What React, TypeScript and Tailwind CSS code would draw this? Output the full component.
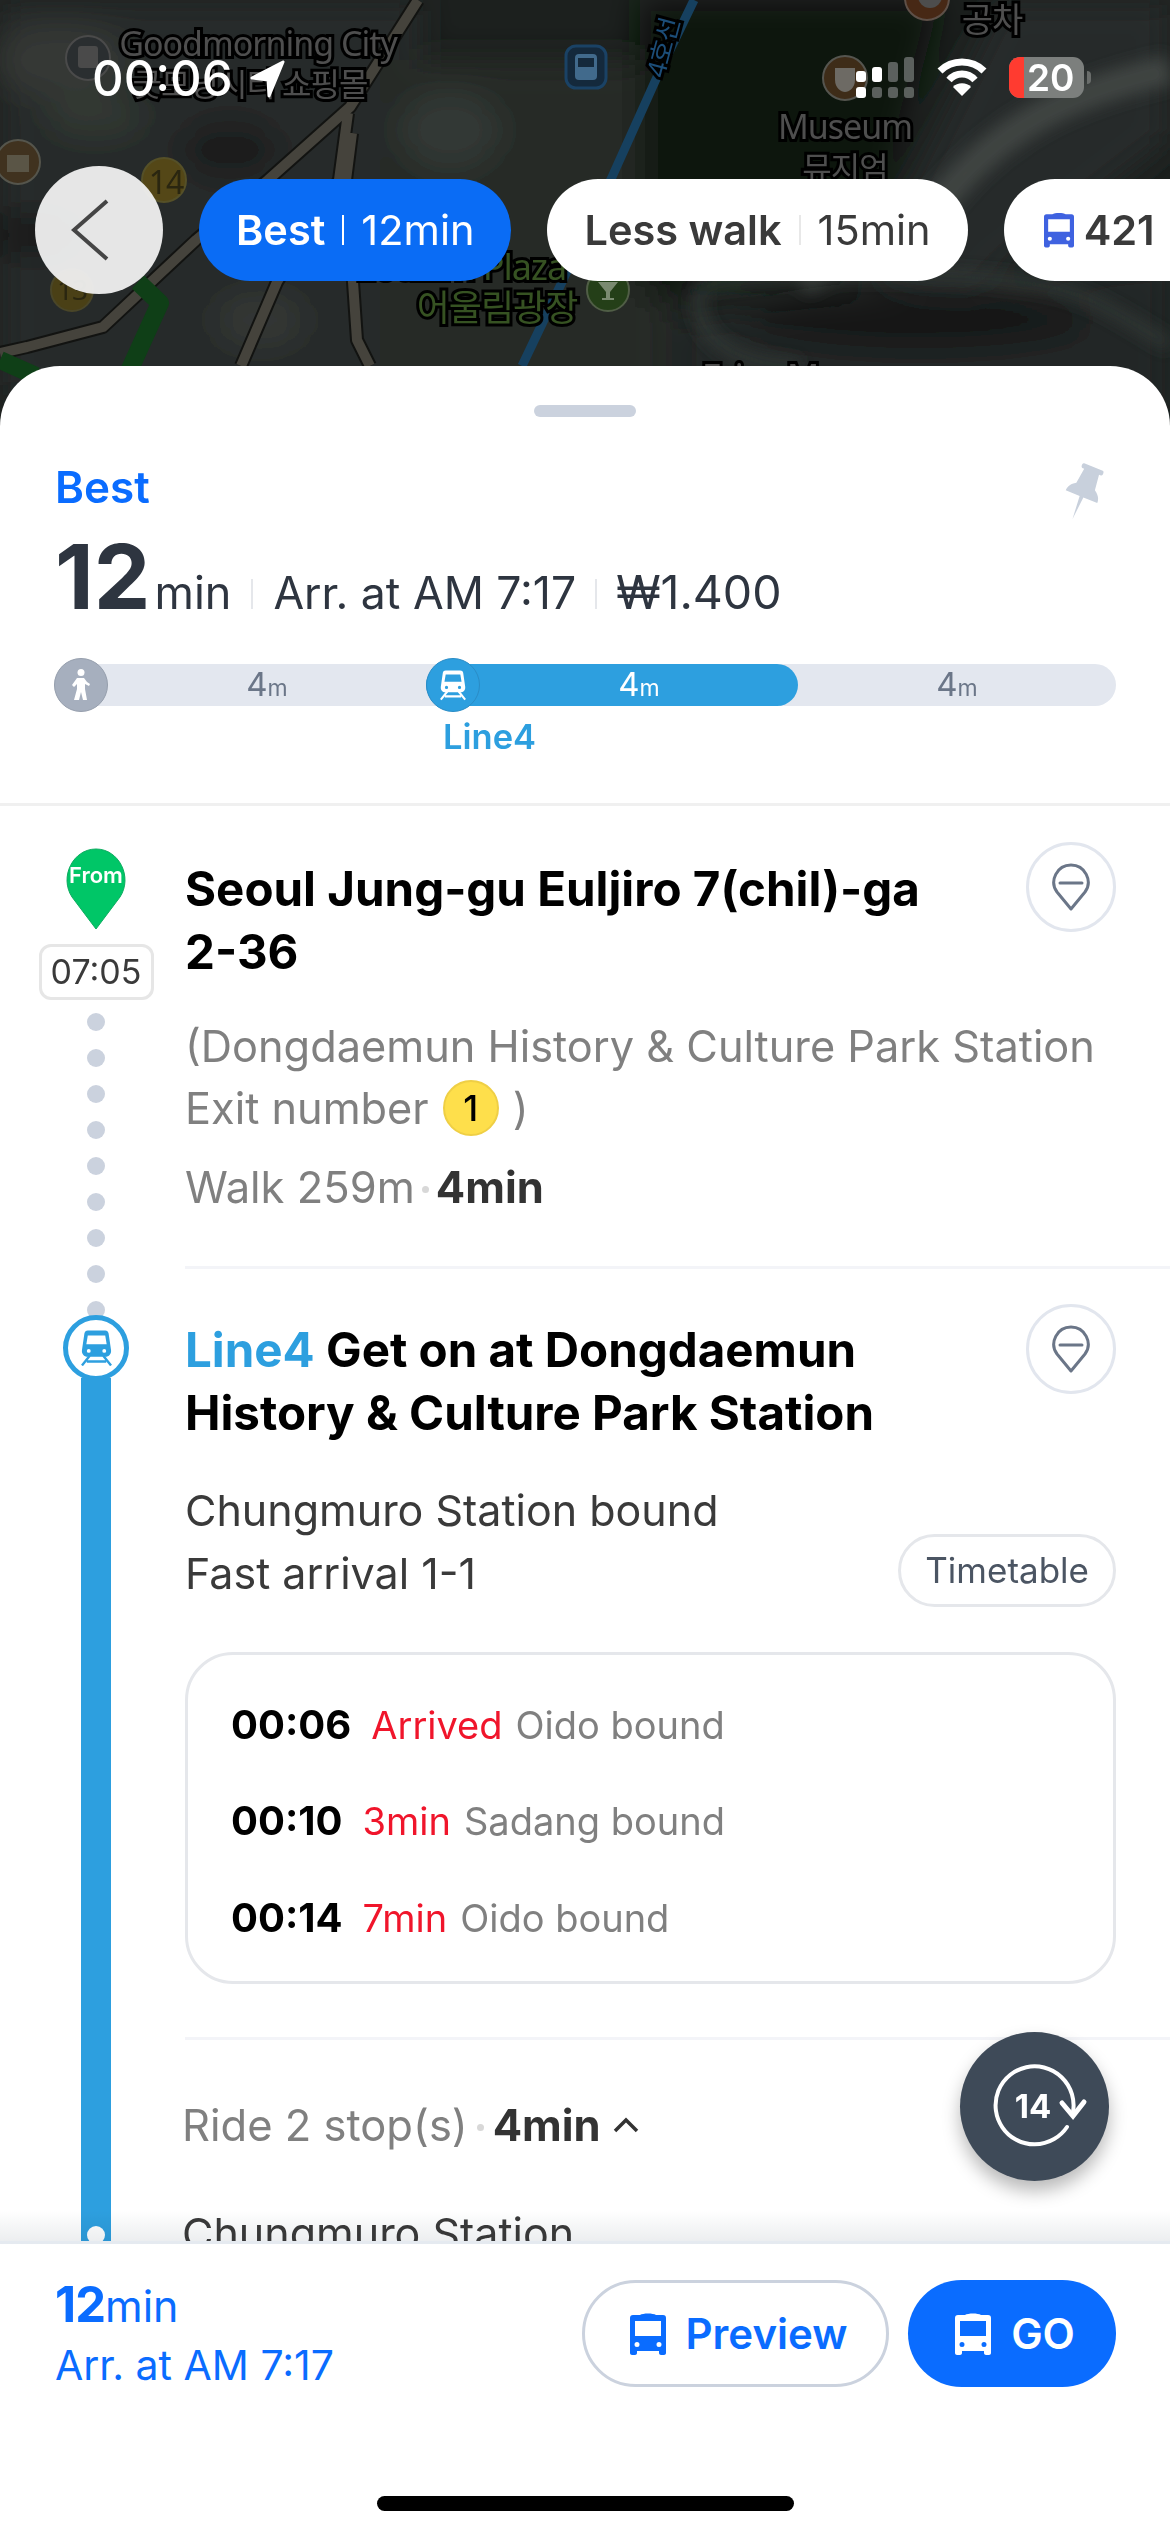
const MapLabel = ({x, y, size, fill = '#4e4e4e', rotate, plain, children}: {x: number; y: number; size: number; fill?: string; rotate?: number; plain?: boolean; children: string}) => (
  <text
    x={x}
    y={y}
    fontSize={size}
    fill={fill}
    stroke={plain ? 'none' : '#000'}
    strokeWidth={6}
    paintOrder="stroke"
    textAnchor="middle"
    letterSpacing={-1}
    fontFamily="'Noto Sans', 'Noto Sans CJK KR', sans-serif"
    transform={rotate ? `rotate(${rotate} ${x} ${y})` : undefined}
  >
    {children}
  </text>
)

const MapBackground = () => (
  <svg className="absolute left-0 top-0" width="1170" height="440" viewBox="0 0 1170 440">
    <defs>
      <filter id="soft" x="-20%" y="-20%" width="140%" height="140%"><feGaussianBlur stdDeviation="16" /></filter>
      <filter id="softer" x="-20%" y="-20%" width="140%" height="140%"><feGaussianBlur stdDeviation="8" /></filter>
    </defs>
    <rect width="1170" height="440" fill="#1c201e" />
    <g filter="url(#soft)">
      <rect x="0" y="0" width="420" height="400" fill="#272b29" />
      <rect x="380" y="60" width="290" height="340" fill="#262a27" />
      <path d="M640 0H940L880 230L640 300Z" fill="#0f1311" />
      <path d="M680 320L1170 260V420H680Z" fill="#222725" />
      <path d="M1000 0H1170V140L960 300L860 280Z" fill="#262b29" />
      <ellipse cx="920" cy="320" rx="170" ry="28" fill="#131715" />
      <ellipse cx="60" cy="60" rx="70" ry="36" fill="#343834" />
      <ellipse cx="95" cy="115" rx="50" ry="22" fill="#323733" />
      <ellipse cx="230" cy="150" rx="50" ry="30" fill="#1a1d1b" />
      <ellipse cx="30" cy="235" rx="50" ry="18" fill="#161917" />
      <ellipse cx="260" cy="320" rx="45" ry="25" fill="#353936" />
      <ellipse cx="450" cy="130" rx="50" ry="40" fill="#333835" />
    </g>
    <g filter="url(#softer)" fill="none">
      <path d="M1170 70C1080 90 1010 120 950 190C920 225 860 250 800 280" stroke="#3f4542" strokeWidth="30" />
      <path d="M700 285C790 270 940 270 1040 285C1100 295 1140 330 1170 345" stroke="#323835" strokeWidth="12" />
      <path d="M700 290C690 340 740 366 800 366" stroke="#323835" strokeWidth="12" />
    </g>
    <g fill="none" strokeLinejoin="round">
      <path d="M418 0L350 107L268 180L196 240L103 327L27 347L0 353M348 113L339 180L277 282L241 366M352 133L346 180L353 282L357 340L370 366" stroke="#121311" strokeWidth="14" />
      <path d="M418 0L350 107L268 180L196 240L103 327L27 347L0 353M348 113L339 180L277 282L241 366M352 133L346 180L353 282L357 340L370 366" stroke="#45433c" strokeWidth="10" />
      <path d="M694 0L657 77L612 177L522 366" stroke="#16405f" strokeWidth="9" />
      <path d="M138 282L160 303L125 380M0 360L36 376" stroke="#0f3f17" strokeWidth="18" />
    </g>
    <circle cx="88" cy="58" r="22" fill="#2a2e30" stroke="#4a4a4a" strokeWidth="2" />
    <rect x="78" y="46" width="20" height="22" rx="3" fill="#4a4a4a" />
    <rect x="566" y="46" width="40" height="42" rx="10" fill="#14293c" stroke="#1a4265" strokeWidth="3" />
    <rect x="575" y="54" width="22" height="26" rx="4" fill="#416a8c" />
    <rect x="578" y="58" width="16" height="9" fill="#14293c" />
    <circle cx="18" cy="162" r="22" fill="#40321f" stroke="#55554c" strokeWidth="2" />
    <rect x="7" y="155" width="22" height="17" fill="#5a5546" />
    <circle cx="164" cy="180" r="22" fill="#544717" stroke="#555028" strokeWidth="2" />
    <circle cx="72" cy="290" r="21" fill="#4a4016" stroke="#4a4628" strokeWidth="2" />
    <circle cx="608" cy="290" r="21" fill="#243f18" stroke="#505e46" strokeWidth="2" />
    <path d="M598 282H618L610 292V298H614V300H602V298H606V292Z" fill="#7a8a70" />
    <circle cx="845" cy="78" r="22" fill="#3e2c18" stroke="#55554f" strokeWidth="2" />
    <path d="M835 68H855V80C855 88 849 92 845 92C841 92 835 88 835 80Z" fill="#6d6a64" />
    <circle cx="927" cy="-2" r="22" fill="#472815" stroke="#5e5048" strokeWidth="2" />
    <circle cx="930" cy="-4" r="12" fill="#4d4d4d" />
    <MapLabel x={258} y={56} size={34}>Goodmorning City</MapLabel>
    <MapLabel x={250} y={96} size={32}>굿모닝시티 쇼핑몰</MapLabel>
    <MapLabel x={672} y={50} size={26} fill="#1c4d78" rotate={-75}>4호선</MapLabel>
    <MapLabel x={992} y={32} size={34}>공차</MapLabel>
    <MapLabel x={845} y={139} size={34}>Museum</MapLabel>
    <MapLabel x={845} y={180} size={32}>뮤지엄</MapLabel>
    <MapLabel x={166} y={194} size={32} fill="#2a2610" plain>14</MapLabel>
    <MapLabel x={72} y={300} size={28} fill="#2a2610" plain>13</MapLabel>
    <MapLabel x={461} y={280} size={36} fill="#365222">Eoullim Plaza</MapLabel>
    <MapLabel x={497} y={321} size={36} fill="#365222">어울림광장</MapLabel>
    <MapLabel x={760} y={390} size={36}>Erica M</MapLabel>
  </svg>
)

const StatusBar = () => (
  <div className="relative flex justify-between pt-[57px] pl-[92px] pr-[79px] h-[166px]">
    <div className="flex items-start gap-[16px] text-white">
      <span className="text-[49px] leading-[44px] font-medium">00:06</span>
      <svg width="38" height="40" viewBox="0 0 38 40" className="mt-[2px]">
        <path d="M34 3L3 19L19 21L20 37Z" fill="#fff" stroke="#fff" strokeWidth="3" strokeLinejoin="round" />
      </svg>
    </div>
    <div className="flex items-start">
      <div className="grid grid-cols-4 gap-x-[6px] gap-y-[5px] items-end w-[58px] h-[41px]">
        <div className="h-[11px] rounded-[3px] bg-white" />
        <div className="h-[15px] rounded-[3px] bg-white" />
        <div className="h-[20px] rounded-[3px] bg-[#5b605d]" />
        <div className="h-[25px] rounded-[3px] bg-[#5b605d]" />
        <div className="h-[11px] rounded-[3px] bg-white" />
        <div className="h-[11px] rounded-[3px] bg-[#5b605d]" />
        <div className="h-[11px] rounded-[3px] bg-[#5b605d]" />
        <div className="h-[11px] rounded-[3px] bg-[#5b605d]" />
      </div>
      <svg width="50" height="39" viewBox="0 0 50 39" className="ml-[23px]" fill="none">
        <path d="M3 14C15 2 35 2 47 14" stroke="#fff" strokeWidth="7" />
        <path d="M12 23C19 15 31 15 38 23" stroke="#fff" strokeWidth="7" />
        <path d="M25 39L16 30C20 25 30 25 34 30Z" fill="#fff" />
      </svg>
      <div className="ml-[22px] flex items-center">
        <div className="relative w-[75px] h-[41px] rounded-[11px] overflow-hidden bg-[#7c7f7d] flex">
          <div className="w-[15px] bg-[#ff3b30]" />
          <span className="ml-[3px] text-[37px] leading-[41px] font-semibold text-white">20</span>
        </div>
        <div className="ml-[3px] w-[4px] h-[13px] rounded-r-full bg-[#6a6d6b]" />
      </div>
    </div>
  </div>
)

const BusIcon = ({className, color}: {className: string; color: string}) => (
  <svg className={className} viewBox="0 0 36 42" fill={color}>
    <path fillRule="evenodd" d="M10 2C13 0 23 0 26 2H33C35 2 36 3 36 5V40C36 41 35 42 34 42H31C30 42 29 41 29 40V38H7V40C7 41 6 42 5 42H2C1 42 0 41 0 40V5C0 3 1 2 3 2ZM5 8V23H31V8ZM7 29A2.5 2.5 0 1 0 7 34A2.5 2.5 0 1 0 7 29ZM29 29A2.5 2.5 0 1 0 29 34A2.5 2.5 0 1 0 29 29Z" />
  </svg>
)

const TrainIcon = ({className, color}: {className: string; color: string}) => (
  <svg className={className} viewBox="0 0 32 36" fill={color}>
    <path fillRule="evenodd" d="M7 0H25C27 0 28 1 28.5 3L31 20C31.500 24 29 27 25 27H7C3 27 0.500 24 1 20L3.500 3C4 1 5 0 7 0ZM7 5L5.500 14H26.500L25 5ZM8 19A2 2 0 1 0 8 23A2 2 0 1 0 8 19ZM24 19A2 2 0 1 0 24 23A2 2 0 1 0 24 19Z" />
    <path d="M9 26L1 36M23 26L31 36M6 32H26" fill="none" stroke={color} strokeWidth="2.500" />
  </svg>
)

const PinButton = () => (
  <div className="w-[90px] h-[90px] shrink-0 rounded-full border-[3px] border-[#e2e6ee] flex items-center justify-center">
    <svg width="40" height="50" viewBox="0 0 40 50" fill="none" stroke="#6b7688" strokeWidth="3" strokeLinejoin="round" strokeLinecap="round">
      <path d="M20 47L6 30C-2 19 6 3 20 3C34 3 42 19 34 30Z" />
      <path d="M9 21H31" />
    </svg>
  </div>
)

const Pill = ({bold, light, active}: {bold: string; light: string; active?: boolean}) => (
  <div className={`h-[102px] shrink-0 rounded-full flex items-center px-[37px] text-[41.500px] ${active ? 'bg-[#0a6cf5] text-white' : 'bg-white text-[#3a3a3a]'}`}>
    <span className="font-semibold">{bold}</span>
    <span className={`mx-[17px] w-[2px] h-[30px] ${active ? 'bg-white' : 'bg-[#e8e8e8]'}`} />
    <span>{light}</span>
  </div>
)

const TopBar = () => (
  <div className="relative flex items-center gap-[36px] pl-[35px] h-[128px] overflow-hidden">
    <div className="w-[128px] h-[128px] shrink-0 rounded-full bg-[#f0f0f0]/95 flex items-center justify-center">
      <svg width="38" height="62" viewBox="0 0 38 62" fill="none" stroke="#454545" strokeWidth="4" className="mr-[18px]">
        <path d="M36 2L3 31L36 60" />
      </svg>
    </div>
    <Pill bold="Best" light="12min" active />
    <Pill bold="Less walk" light="15min" />
    <div className="h-[102px] shrink-0 rounded-full bg-white flex items-center pl-[40px] pr-[37px] text-[41.500px] text-[#3a3a3a]">
      <BusIcon className="w-[30px] h-[36px] mr-[10px]" color="#3f62e0" />
      <span className="font-semibold">421</span>
      <span className="mx-[17px] w-[2px] h-[30px] bg-[#e8e8e8]" />
      <span>18min</span>
    </div>
  </div>
)

const Segment = ({className, textClass, icon}: {className: string; textClass: string; icon?: React.ReactNode}) => (
  <div className={`flex items-center ${className}`}>
    {icon}
    <span className={`flex-1 text-center text-[33px] leading-none ${textClass}`}>4<span className="text-[23px]">m</span></span>
  </div>
)

const Summary = () => (
  <div className="px-[54px] border-b-[3px] border-[#f0f0f0]">
    <div className="flex justify-between pt-[45px]">
      <span className="pl-[1px] text-[44px] leading-[50px] font-semibold text-[#0a6cff]">Best</span>
      <svg width="44" height="58" viewBox="0 0 42 58" fill="#c8d0dc" className="mt-[2px] mr-[11px] rotate-[22deg]">
        <path d="M11 1H31C33 1 33 6 31 6H29L31 22C36 25 38 29 38 33H23L21 57L19 33H4C4 29 6 25 11 22L13 6H11C9 6 9 1 11 1Z" />
      </svg>
    </div>
    <div className="flex items-baseline mt-[11px] pl-[1px] text-[#2e3540]">
      <span className="text-[90px] leading-[87px] font-bold">12</span>
      <span className="text-[45px] ml-[4px]">min</span>
      <span className="w-[2px] h-[30px] bg-[#e5e7eb] mx-[20px]" />
      <span className="text-[44.500px]">Arr. at AM 7:17</span>
      <span className="w-[2px] h-[30px] bg-[#e5e7eb] mx-[19px]" />
      <span className="text-[46.500px]">₩1.400</span>
    </div>
    <div className="flex mt-[36px] h-[42px] rounded-full bg-[#e3e7ef]">
      <Segment
        className="w-[372px]"
        textClass="text-[#6b7688]"
        icon={
          <div className="w-[54px] h-[54px] shrink-0 rounded-full bg-[#a6afbe] border border-[#969fad] flex items-center justify-center">
            <svg width="20" height="32" viewBox="0 0 20 32" fill="#fff">
              <circle cx="10" cy="3.500" r="3.500" />
              <path d="M6 9H13L16 13L19 15L18 17L14 15V20L16 31H12L10 23L8 31H3L6 20V15L3 18L1 16Z" />
            </svg>
          </div>
        }
      />
      <Segment
        className="w-[372px] bg-[#2d9fdf] rounded-full"
        textClass="text-white"
        icon={
          <div className="w-[54px] h-[54px] shrink-0 rounded-full bg-[#2d9fdf] border border-[#2a8cc6] flex items-center justify-center">
            <TrainIcon className="w-[26px] h-[32px]" color="#fff" />
          </div>
        }
      />
      <Segment className="flex-1" textClass="text-[#6b7688]" />
    </div>
    <div className="pl-[389px] mt-[11px] mb-[46px] text-[34.500px] leading-[40px] font-semibold text-[#2d9fdf]">Line4</div>
  </div>
)

const Rail = () => (
  <div className="w-[185px] shrink-0 pl-[7px] flex flex-col items-center">
    <svg width="62" height="82" viewBox="0 0 62 82" className="mt-[42px] shrink-0">
      <path d="M31 81L7 49C-6 29 8 1 31 1C54 1 68 29 55 49Z" fill="#00c667" stroke="#0cab5f" strokeWidth="1" />
      <text x="31" y="35" textAnchor="middle" fontSize="22" fontWeight="600" fill="#fff" fontFamily="Inter, sans-serif">From</text>
    </svg>
    <div className="mt-[14px] w-[115px] h-[56px] shrink-0 rounded-[12px] border-[3px] border-[#e6e6e6] flex items-center justify-center text-[34px] text-[#3a3a3a]">07:05</div>
    <div className="mt-[13px] flex flex-col gap-[18px] shrink-0">
      {[0, 1, 2, 3, 4, 5, 6, 7, 8].map((dot) => (
        <div key={dot} className="w-[18px] h-[18px] rounded-full bg-[#cbd2de]" />
      ))}
    </div>
    <div className="relative -mt-[4px] w-[66px] h-[66px] shrink-0 rounded-full bg-white border-[5px] border-[#2d9fdf] flex items-center justify-center">
      <TrainIcon className="w-[31px] h-[36px]" color="#2d9fdf" />
    </div>
    <div className="relative -mt-[3px] w-[30px] flex-1 bg-[#2d9fdf]">
      <div className="absolute left-[6px] -bottom-[3px] w-[18px] h-[18px] rounded-full bg-white" />
    </div>
  </div>
)

const Departure = ({time, status, bound}: {time: string; status: string; bound: string}) => (
  <div className="flex items-baseline h-[96.5px] pt-[36px]">
    <span className="text-[40px] leading-[48px] font-bold text-black">{time}</span>
    <span className="ml-[20px] text-[38px] leading-[48px] text-[#f0152b]">{status}</span>
    <span className="ml-[13px] text-[38px] leading-[48px] text-[#808080]">{bound}</span>
  </div>
)

const Steps = () => (
  <div className="flex-1 min-w-0">
    <div className="pt-[36px] pr-[54px] border-b-[3px] border-[#f3f4f8] h-[463px]">
      <div className="flex justify-between">
        <div className="mt-[15px] text-[47.500px] leading-[63px] font-bold text-black">
          Seoul Jung-gu Euljiro 7(chil)-ga
          <br />
          2-36
        </div>
        <PinButton />
      </div>
      <div className="mt-[32px] text-[43.300px] leading-[62px] text-[#808080]">
        <div className="whitespace-nowrap">(Dongdaemun History &amp; Culture Park Station</div>
        <div className="flex items-center">
          Exit number
          <span className="mx-[14px] w-[56px] h-[56px] rounded-full bg-[#fedf4b] border-[2px] border-[#efcf45] flex items-center justify-center text-[36px] font-medium text-black">1</span>
          )
        </div>
      </div>
      <div className="flex items-center mt-[17px] text-[43.500px] leading-[62px]">
        <span className="text-[#808080]">Walk 259m</span>
        <span className="mx-[7px] w-[7px] h-[7px] rounded-full bg-[#d8d8d8] mt-[6px]" />
        <span className="font-bold text-[#333]">4min</span>
      </div>
    </div>
    <div className="pt-[35px] pr-[54px] border-b-[3px] border-[#f3f4f8] h-[771px]">
      <div className="flex justify-between">
        <div className="mt-[14px] text-[47.500px] leading-[63px] font-bold text-black">
          <span className="text-[#2d9fdf]">Line4</span> Get on at Dongdaemun
          <br />
          History &amp; Culture Park Station
        </div>
        <PinButton />
      </div>
      <div className="flex justify-between items-end mt-[35px]">
        <div className="text-[43px] leading-[63px] text-[#3a3a3a]">
          Chungmuro Station bound
          <br />
          Fast arrival 1-1
        </div>
        <div className="mb-[-2px] h-[73px] px-[24px] rounded-full border-[3px] border-[#e5e7eb] flex items-center text-[35px] text-[#4b5563]">Timetable</div>
      </div>
      <div className="mt-[47px] h-[332px] rounded-[48px] border-[3px] border-[#e5e7eb] pl-[43px] pt-[10px]">
        <Departure time="00:06" status="Arrived" bound="Oido bound" />
        <Departure time="00:10" status="3min" bound="Sadang bound" />
        <Departure time="00:14" status="7min" bound="Oido bound" />
      </div>
    </div>
    <div className="flex items-center pt-[54px] -ml-[3px] text-[43.500px] leading-[62px]">
      <span className="text-[#808080]">Ride 2 stop(s)</span>
      <span className="mx-[9px] w-[7px] h-[7px] rounded-full bg-[#d8d8d8] mt-[6px]" />
      <span className="font-bold text-[#333]">4min</span>
      <svg width="26" height="16" viewBox="0 0 26 16" fill="none" stroke="#333" strokeWidth="3.500" className="ml-[12px]">
        <path d="M2 14L13 3L24 14" />
      </svg>
    </div>
    <div className="pt-[46px] -ml-[3px] text-[43px] leading-[62px] text-[#3a3a3a]">Chungmuro Station</div>
  </div>
)

const HistoryButton = () => (
  <div className="absolute right-[61px] bottom-[60px] w-[149px] h-[149px] rounded-full bg-[#3e4a58] shadow-[0_10px_18px_rgba(0,0,0,0.28)]">
    <svg width="149" height="149" viewBox="0 0 149 149" fill="none" stroke="#fff" strokeWidth="4" strokeLinecap="round">
      <path d="M107 95A39 39 0 1 1 113 80" />
      <path d="M102 71L113 84L124 70" strokeWidth="5" />
      <text x="73" y="86" textAnchor="middle" fontSize="33" fontWeight="700" fill="#fff" stroke="none" fontFamily="Inter, sans-serif">14</text>
    </svg>
  </div>
)

const BottomBar = () => (
  <div className="relative shrink-0 bg-white border-t-[3px] border-[#e5eaf0] h-[291px]">
    <div className="flex justify-between pt-[36px] pl-[55px] pr-[54px] text-[#0a6cff]">
      <div>
        <div className="flex items-baseline h-[50px] leading-[50px]">
          <span className="text-[49px] font-bold tracking-[-1px]">12</span>
          <span className="text-[43px]">min</span>
        </div>
        <div className="mt-[10px] text-[41px] leading-[50px]">Arr. at AM 7:17</div>
      </div>
      <div className="flex gap-[19px]">
        <div className="w-[307px] h-[107px] pl-[6px] rounded-full border-[3px] border-[#cbd2de] flex items-center justify-center gap-[20px] text-[42px] font-semibold">
          <BusIcon className="w-[36px] h-[42px]" color="#0a6cff" />
          Preview
        </div>
        <div className="w-[208px] h-[107px] pl-[6px] rounded-full bg-[#0a6cff] flex items-center justify-center gap-[20px] text-[42px] font-semibold text-white">
          <BusIcon className="w-[36px] h-[42px]" color="#fff" />
          GO
        </div>
      </div>
    </div>
    <div className="mt-[106px] mx-auto w-[417px] h-[15px] rounded-full bg-black" />
  </div>
)

export default function App() {
  return (
    <div className="relative w-[1170px] h-[2532px] overflow-hidden bg-white flex flex-col [font-family:Inter,sans-serif]">
      <MapBackground />
      <div className="relative h-[366px] shrink-0">
        <StatusBar />
        <TopBar />
      </div>
      <div className="relative flex-1 min-h-0 flex flex-col bg-white rounded-t-[60px] overflow-hidden">
        <div className="mt-[39px] mx-auto w-[102px] h-[12px] shrink-0 rounded-full bg-[#cbd2de]" />
        <Summary />
        <div className="relative flex-1 min-h-0 flex overflow-hidden">
          <Rail />
          <Steps />
          <div className="absolute left-0 right-0 bottom-0 h-[30px] bg-gradient-to-b from-white to-[#eceef0] mix-blend-multiply" />
          <HistoryButton />
        </div>
        <BottomBar />
      </div>
    </div>
  )
}
